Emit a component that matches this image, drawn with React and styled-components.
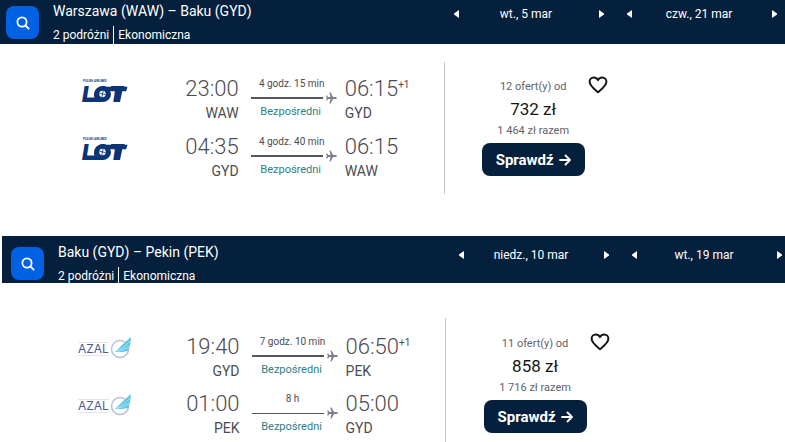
import React from 'react';
import styled, {createGlobalStyle} from 'styled-components';

const GlobalStyle = createGlobalStyle`
  * {
    box-sizing: border-box;
  }
  body {
    margin: 0;
    background: #fff;
    color: #4c4c52;
    font-family: Roboto, "Liberation Sans", sans-serif;
  }
  button {
    font-family: inherit;
    border: none;
    padding: 0;
    cursor: pointer;
  }
`;

const Section = styled.section`
  margin-left: ${props => props.$inset || 0}px;
`;

const Bar = styled.header`
  display: flex;
  align-items: flex-start;
  height: ${props => props.$tall ? 47 : 44}px;
  padding: ${props => props.$tall ? '11px 3px 0 9px' : '6px 8px 0 6px'};
  background: #05203c;
  color: #fff;
`;

const SearchButton = styled.button`
  display: flex;
  flex: none;
  align-items: center;
  justify-content: center;
  width: 33px;
  height: 33px;
  border-radius: 8px;
  background: #0062e3;
`;

const Route = styled.div`
  flex: 1;
  margin: -6px 0 0 14px;
  white-space: nowrap;
  h2 {
    margin: 0;
    font-size: 14px;
    line-height: 22px;
    font-weight: 400;
  }
`;

const Details = styled.div`
  display: flex;
  font-size: 12px;
  line-height: 18px;
  margin-top: 4px;
  span + span {
    margin-left: 4px;
    padding-left: 4px;
    border-left: 1px solid #fff;
  }
`;

const Dates = styled.div`
  display: flex;
  gap: 23px;
`;

const Stepper = styled.div`
  display: flex;
  align-items: center;
  justify-content: space-between;
  width: 150px;
  height: 15px;
  font-size: 12px;
  span {
    padding-right: 6px;
  }
  button {
    display: flex;
    background: none;
  }
`;

const Card = styled.article`
  display: grid;
  grid-template-columns: 13fr 10fr;
  padding: ${props => props.$last ? '35px 0 0' : '18px 0 42px'};
`;

const Legs = styled.div`
  display: flex;
  flex-direction: column;
  gap: ${props => props.$last ? 9 : 10}px;
  padding: ${props => props.$last ? '16px 0 3px 75px' : '14px 0 12px 75px'};
`;

const Leg = styled.div`
  display: grid;
  grid-template-columns: 60px 1fr 86px 107px;
  height: 48px;
`;

const Logo = styled.svg`
  width: 60px;
  height: 30px;
`;

const Stop = styled.div`
  padding: ${props => props.$arrival ? '0 0 0 8px' : '0 12px 0 0'};
  text-align: ${props => props.$arrival ? 'left' : 'right'};
  white-space: nowrap;
  time {
    display: flex;
    justify-content: ${props => props.$arrival ? 'flex-start' : 'flex-end'};
    font-size: 22px;
    line-height: 26px;
    font-weight: 350;
  }
  sup {
    font-size: 10px;
    line-height: 18px;
    font-weight: 400;
  }
  div {
    font-size: 14px;
    line-height: 22px;
  }
`;

const Duration = styled.div`
  font-size: 10px;
  line-height: 16px;
  text-align: center;
  white-space: nowrap;
  p {
    margin: 0;
    padding-right: 4px;
  }
  p:last-child {
    padding-right: 6px;
    color: #2b7f86;
    font-size: 11px;
  }
`;

const Track = styled.div`
  display: flex;
  align-items: center;
  height: 12px;
  gap: 3px;
  &::before {
    content: '';
    flex: 1;
    height: ${props => props.$thin ? 1 : 2}px;
    background: #56555f;
  }
`;

const Offer = styled.div`
  display: flex;
  align-items: flex-start;
  gap: 3px;
  padding: ${props => props.$last ? '15px 0 0 38px' : '14px 0 0 37px'};
  border-left: 1px solid #c1c7cf;
`;

const Price = styled.div`
  width: 103px;
  text-align: center;
  white-space: nowrap;
  small {
    display: block;
    color: #626268;
    font-size: 11px;
    line-height: 22px;
  }
  strong {
    display: block;
    color: #161616;
    font-size: 17px;
    line-height: 22px;
    font-weight: 400;
  }
`;

const CheckButton = styled.button`
  display: flex;
  align-items: center;
  justify-content: center;
  gap: 5px;
  width: 100%;
  height: 33px;
  margin-top: 1px;
  border-radius: 8px;
  background: #05203c;
  color: #fff;
  font-size: 15px;
  font-weight: 700;
`;

const HeartButton = styled.button`
  display: flex;
  background: none;
`;

const Triangle = ({left}) => (
    <svg width="5" height="8" viewBox="0 0 5 8">
        <path d={left ? 'M5 0v8L0 4.5v-1z' : 'M0 0v8l5-3.5v-1z'} fill="#fff"/>
    </svg>
);

const SearchIcon = () => (
    <svg width="14" height="14" viewBox="0 0 14 14" fill="none" stroke="#fff" strokeWidth="1.8" strokeLinecap="round">
        <circle cx="6" cy="6" r="4.6"/>
        <path d="M9.5 9.5L12.6 12.6"/>
    </svg>
);

const Plane = () => (
    <svg width="11" height="12" viewBox="0 0 11 12">
        <path d="M10.8 6c0 .6-.6 1-1.3 1H7L4.6 11.5H3.4L4.5 7H2.3L1.2 8.6H.2L.8 6 .2 3.4h1L2.3 5h2.2L3.4.5h1.2L7 5h2.5c.7 0 1.3.4 1.3 1z" fill="#827d8c"/>
    </svg>
);

const Arrow = () => (
    <svg width="12" height="12" viewBox="0 0 12 12" fill="none" stroke="#fff" strokeWidth="1.8" strokeLinecap="round" strokeLinejoin="round">
        <path d="M1 6h10M6.5 1.5L11 6l-4.5 4.5"/>
    </svg>
);

const Heart = () => (
    <svg width="20" height="18" viewBox="0 0 20 18" fill="none" stroke="#161616" strokeWidth="2" strokeLinejoin="round">
        <path d="M10 16.3C5.5 12.6 1.6 9.6 1.6 5.8 1.6 3.3 3.4 1.5 5.8 1.5c1.8 0 3.3.9 4.2 2.6.9-1.7 2.4-2.6 4.2-2.6 2.4 0 4.2 1.8 4.2 4.3 0 3.8-3.9 6.8-8.4 10.5z"/>
    </svg>
);

const LotLogo = () => (
    <Logo viewBox="0 0 60 30" role="img" aria-label="LOT" fill="#0b3577">
        <text x="8" y="6" fontSize="3" fontWeight="700" fontStyle="italic">POLISH AIRLINES</text>
        <text x="7" y="26" fontSize="21" fontWeight="900" fontStyle="italic" fontFamily="Inter">LOT</text>
        {/* foot of the L and bar of the T run into the disc */}
        <path d="M9 21.5h18V26H8zM28 10.7h24.5l-1.3 4.6H32z"/>
        <path d="M41.5 14h6l-2.500 12h-6z"/>
        <ellipse cx="27.5" cy="18.3" rx="8.5" ry="7.700"/>
        <circle cx="27.5" cy="18" r="3.2" fill="#fff"/>
        <path d="M24.5 17.2l3 .8.6-3M27.5 18l-.6 3M27.5 18l3 .6" stroke="#0b3577" strokeWidth=".8" fill="none"/>
    </Logo>
);

const AzalLogo = () => (
    <Logo viewBox="2 -1 60 30" role="img" aria-label="AZAL">
        <path d="M3 7.5h31M3 20.5h31" stroke="#dfe3ec"/>
        <text x="3" y="18" fontSize="12" fontFamily="Inter" fill="#4c5b94">AZAL</text>
        <circle cx="45" cy="14" r="8.5" fill="none" stroke="#b9bfd9" strokeWidth="1.5"/>
        <path d="M40 17C45 12 50 7 56 2c0 5-1 9-3 14-4 1-8 1-13 1z" fill="#62c8e6"/>
        <path d="M42 15.8C47 14 51 11 55.5 5.5M42 16.5c5-1 8-2.5 12-5" stroke="#d7f1fa" strokeWidth=".6" fill="none"/>
    </Logo>
);

const trips = [
    {
        route: 'Warszawa (WAW) – Baku (GYD)',
        dates: ['wt., 5 mar', 'czw., 21 mar'],
        logo: LotLogo,
        legs: [
            {out: '23:00', from: 'WAW', time: '4 godz. 15 min', into: '06:15', to: 'GYD', plus: '+1'},
            {out: '04:35', from: 'GYD', time: '4 godz. 40 min', into: '06:15', to: 'WAW'},
        ],
        offers: '12 ofert(y) od',
        price: '732 zł',
        total: '1 464 zł razem',
    },
    {
        route: 'Baku (GYD) – Pekin (PEK)',
        dates: ['niedz., 10 mar', 'wt., 19 mar'],
        logo: AzalLogo,
        legs: [
            {out: '19:40', from: 'GYD', time: '7 godz. 10 min', into: '06:50', to: 'PEK', plus: '+1'},
            {out: '01:00', from: 'PEK', time: '8 h', into: '05:00', to: 'GYD', thin: true},
        ],
        offers: '11 ofert(y) od',
        price: '858 zł',
        total: '1 716 zł razem',
    },
];

const Trip = ({trip, last}) => {
    const AirlineLogo = trip.logo;

    return (
        <Section $inset={last ? 2 : 0}>
            <Bar $tall={last}>
                <SearchButton aria-label="Szukaj"><SearchIcon/></SearchButton>
                <Route>
                    <h2>{trip.route}</h2>
                    <Details><span>2 podróżni</span><span>Ekonomiczna</span></Details>
                </Route>
                <Dates>
                    {trip.dates.map(date => (
                        <Stepper key={date}>
                            <button aria-label="Poprzedni dzień"><Triangle left/></button>
                            <span>{date}</span>
                            <button aria-label="Następny dzień"><Triangle/></button>
                        </Stepper>
                    ))}
                </Dates>
            </Bar>
            <Card $last={last}>
                <Legs $last={last}>
                    {trip.legs.map(leg => (
                        <Leg key={leg.out}>
                            <AirlineLogo/>
                            <Stop><time>{leg.out}</time><div>{leg.from}</div></Stop>
                            <Duration>
                                <p>{leg.time}</p>
                                <Track $thin={leg.thin}><Plane/></Track>
                                <p>Bezpośredni</p>
                            </Duration>
                            <Stop $arrival>
                                <time>{leg.into}{leg.plus && <sup>{leg.plus}</sup>}</time>
                                <div>{leg.to}</div>
                            </Stop>
                        </Leg>
                    ))}
                </Legs>
                <Offer $last={last}>
                    <Price>
                        <small>{trip.offers}</small>
                        <strong>{trip.price}</strong>
                        <small>{trip.total}</small>
                        <CheckButton>Sprawdź <Arrow/></CheckButton>
                    </Price>
                    <HeartButton aria-label="Zapisz"><Heart/></HeartButton>
                </Offer>
            </Card>
        </Section>
    );
};

const App = () => (
    <>
        <GlobalStyle/>
        <main>
            {trips.map((trip, i) => <Trip key={trip.route} trip={trip} last={i === trips.length - 1}/>)}
        </main>
    </>
);

export default App;
